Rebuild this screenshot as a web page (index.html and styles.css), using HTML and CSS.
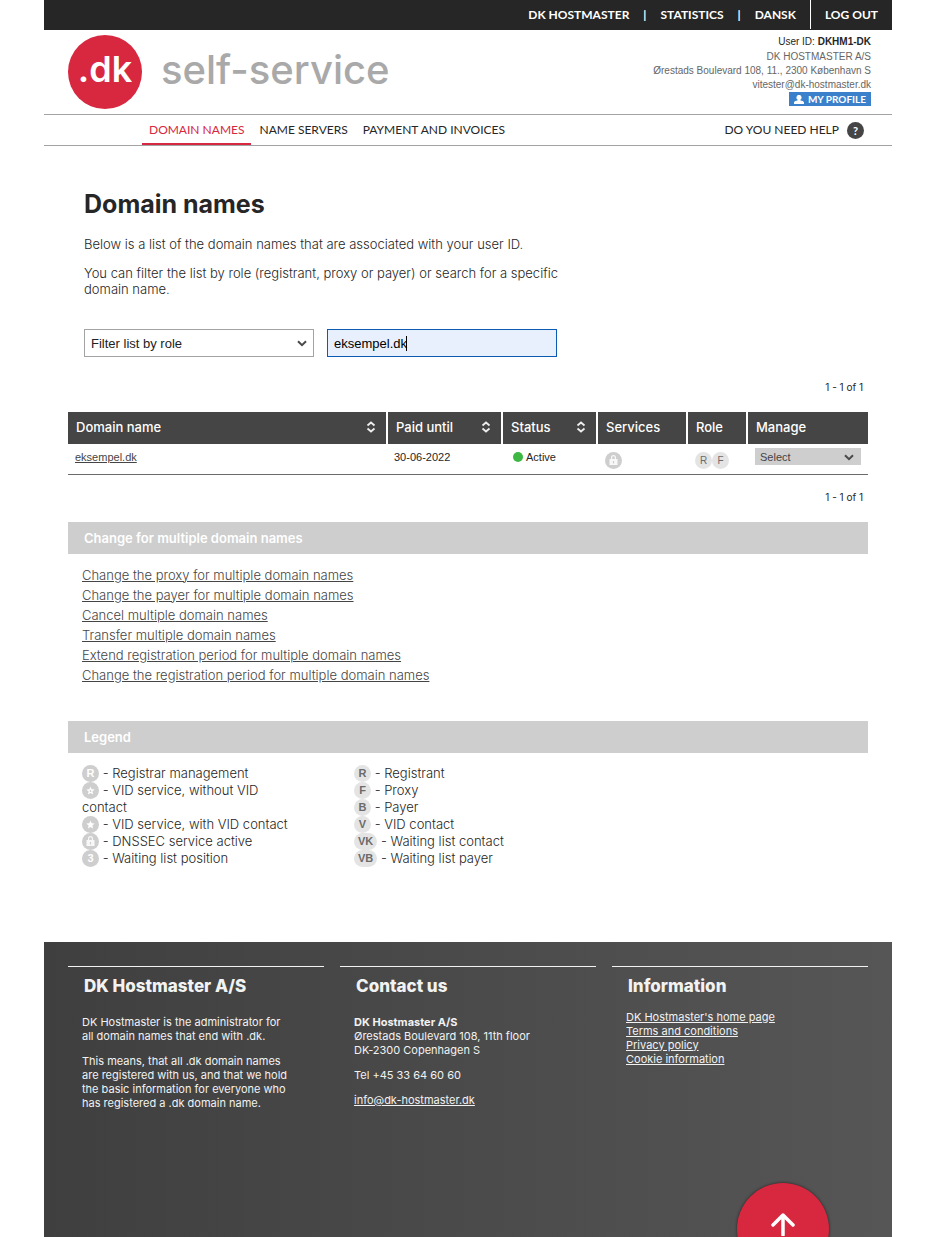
FILE: index.html
```html
<!DOCTYPE html>
<html lang="en">
<head>
<meta charset="utf-8">
<title>Domain names - self-service</title>
<meta name="viewport" content="width=device-width, initial-scale=1">
<link rel="stylesheet" href="styles.css">
</head>
<body>
<svg class="defs" aria-hidden="true">
  <symbol id="lock" viewBox="0 0 17 17"><path d="M4.500 7h8v6h-8zM6 7V5.500a2.500 2.500 0 0 1 5 0V7h-1.200V5.600a1.300 1.300 0 0 0-2.600 0V7z" fill="#fff" opacity=".85"/><path d="M8.500 9v2.500" stroke="#cecece" stroke-width="1.200"/></symbol>
  <symbol id="star" viewBox="0 0 17 17"><path d="M8.500 4.500l1.200 2.800 3 .3-2.300 2 .7 2.900-2.600-1.600-2.600 1.600.7-2.900-2.300-2 3-.3z" fill="#fff"/></symbol>
  <symbol id="star-open" viewBox="0 0 17 17"><path d="M8.500 4.500l1.200 2.800 3 .3-2.300 2 .7 2.900-2.600-1.600-2.600 1.600.7-2.900-2.300-2 3-.3z" fill="#fff"/><circle cx="8.500" cy="9" r=".9" fill="#cecece"/></symbol>
  <symbol id="sort" viewBox="0 0 10 12"><path d="M1.500 4.500L5 1.500l3.500 3M1.500 7.500l3.500 3 3.500-3" fill="none" stroke="#eee" stroke-width="1.800"/></symbol>
  <symbol id="chevron" viewBox="0 0 10 7"><path d="M1 1.200l4 4 4-4" fill="none" stroke="#4a4a4a" stroke-width="2"/></symbol>
</svg>
<div class="page">
  <nav class="topbar" aria-label="Site">
    <div class="topbar-links">
      <a href="#">DK HOSTMASTER</a><span>|</span><a href="#">STATISTICS</a><span>|</span><a href="#">DANSK</a>
    </div>
    <a class="logout" href="#">LOG OUT</a>
  </nav>
  <header class="header">
    <a class="brand" href="#"><span class="brand-disc">.dk</span><span class="brand-name">self-service</span></a>
    <div class="user">
      <p class="user-id">User ID: <b>DKHM1-DK</b></p>
      <p>DK HOSTMASTER A/S</p>
      <p>Ørestads Boulevard 108, 11., 2300 København S</p>
      <p>vitester@dk-hostmaster.dk</p>
      <a class="profile" href="#"><svg width="10" height="9" viewBox="0 0 10 9" aria-hidden="true"><path d="M5 0a2.300 2.500 0 0 1 1.300 4.700v.6c1.500.5 3.700 1 3.700 2.200V9H0V7.500c0-1.200 2.200-1.700 3.700-2.200v-.6A2.300 2.500 0 0 1 5 0z" fill="#fff"/></svg>MY PROFILE</a>
    </div>
  </header>
  <nav class="menu" aria-label="Main">
    <div class="menu-items">
      <a class="current" href="#">DOMAIN NAMES</a>
      <a href="#">NAME SERVERS</a>
      <a href="#">PAYMENT AND INVOICES</a>
    </div>
    <a class="help" href="#">DO YOU NEED HELP <span class="help-mark">?</span></a>
  </nav>
  <main class="main">
    <div class="intro">
      <h1>Domain names</h1>
      <p>Below is a list of the domain names that are associated with your user ID.</p>
      <p>You can filter the list by role (registrant, proxy or payer) or search for a specific domain name.</p>
      <form class="filters">
        <div class="select-box">
          <select class="role-select" aria-label="Filter list by role"><option>Filter list by role</option></select>
          <svg class="select-arrow" width="10" height="7" aria-hidden="true"><use href="#chevron"/></svg>
        </div>
        <div class="search-box">
          <input class="search" type="text" value="eksempel.dk" aria-label="Search for a domain name">
        </div>
      </form>
    </div>
    <p class="count">1 - 1 of 1</p>
    <table class="domains">
      <colgroup><col><col class="c-paid"><col class="c-status"><col class="c-services"><col class="c-role"><col class="c-manage"></colgroup>
      <thead>
        <tr>
          <th><div class="sortable">Domain name<svg width="10" height="12"><use href="#sort"/></svg></div></th>
          <th><div class="sortable">Paid until<svg width="10" height="12"><use href="#sort"/></svg></div></th>
          <th><div class="sortable">Status<svg width="10" height="12"><use href="#sort"/></svg></div></th>
          <th>Services</th>
          <th>Role</th>
          <th>Manage</th>
        </tr>
      </thead>
      <tbody>
        <tr>
          <td><a href="#">eksempel.dk</a></td>
          <td>30-06-2022</td>
          <td><div class="status"><i class="dot"></i>Active</div></td>
          <td><div class="tags"><span class="badge dark"><svg width="17" height="17"><use href="#lock"/></svg></span></div></td>
          <td><div class="tags"><span class="badge small">R</span><span class="badge small">F</span></div></td>
          <td><div class="select-box manage"><select class="manage-select" aria-label="Manage eksempel.dk"><option>Select</option></select><svg class="select-arrow" width="10" height="7" aria-hidden="true"><use href="#chevron"/></svg></div></td>
        </tr>
      </tbody>
    </table>
    <p class="count count-below">1 - 1 of 1</p>
    <h2 class="band">Change for multiple domain names</h2>
    <ul class="actions">
      <li><a href="#">Change the proxy for multiple domain names</a></li>
      <li><a href="#">Change the payer for multiple domain names</a></li>
      <li><a href="#">Cancel multiple domain names</a></li>
      <li><a href="#">Transfer multiple domain names</a></li>
      <li><a href="#">Extend registration period for multiple domain names</a></li>
      <li><a href="#">Change the registration period for multiple domain names</a></li>
    </ul>
    <h2 class="band">Legend</h2>
    <div class="legend">
      <ul>
        <li><span class="badge dark">R</span> - Registrar management</li>
        <li><span class="badge dark"><svg width="17" height="17"><use href="#star-open"/></svg></span> - VID service, without VID contact</li>
        <li><span class="badge dark"><svg width="17" height="17"><use href="#star"/></svg></span> - VID service, with VID contact</li>
        <li><span class="badge dark"><svg width="17" height="17"><use href="#lock"/></svg></span> - DNSSEC service active</li>
        <li><span class="badge dark">3</span> - Waiting list position</li>
      </ul>
      <ul>
        <li><span class="badge">R</span> - Registrant</li>
        <li><span class="badge">F</span> - Proxy</li>
        <li><span class="badge">B</span> - Payer</li>
        <li><span class="badge">V</span> - VID contact</li>
        <li><span class="badge">VK</span> - Waiting list contact</li>
        <li><span class="badge">VB</span> - Waiting list payer</li>
      </ul>
    </div>
  </main>
  <footer class="footer">
    <section>
      <h2>DK Hostmaster A/S</h2>
      <p>DK Hostmaster is the administrator for all domain names that end with .dk.</p>
      <p>This means, that all .dk domain names are registered with us, and that we hold the basic information for everyone who has registered a .dk domain name.</p>
    </section>
    <section>
      <h2>Contact us</h2>
      <p><b>DK Hostmaster A/S</b><br>Ørestads Boulevard 108, 11th floor<br>DK-2300 Copenhagen S</p>
      <p>Tel +45 33 64 60 60</p>
      <p><a href="#">info@dk-hostmaster.dk</a></p>
    </section>
    <section>
      <h2>Information</h2>
      <ul>
        <li><a href="#">DK Hostmaster's home page</a></li>
        <li><a href="#">Terms and conditions</a></li>
        <li><a href="#">Privacy policy</a></li>
        <li><a href="#">Cookie information</a></li>
      </ul>
    </section>
    <a class="to-top" href="#" aria-label="Back to top"><svg width="26" height="24" viewBox="0 0 26 24" aria-hidden="true"><path d="M13 23V3M3 13L13 3l10 10" fill="none" stroke="#fff" stroke-width="3.500" stroke-linecap="round" stroke-linejoin="round"/></svg></a>
  </footer>
</div>
</body>
</html>
```
FILE: styles.css
```css
* { box-sizing: border-box; }

body {
  margin: 0;
  background: #fff;
  color: #262626;
  font-family: Inter, "Liberation Sans", sans-serif;
  font-size: 13px;
}

h1, h2, p, ul { margin: 0; padding: 0; }
ul { list-style: none; }
a { color: inherit; }
.defs { display: none; }

.page {
  display: flex;
  flex-direction: column;
  min-height: 100vh;
  padding: 0 43px 0 44px;
}

.topbar {
  display: flex;
  justify-content: flex-end;
  height: 30px;
  background: #262626;
  color: #fff;
  font-family: Lato, sans-serif;
  font-size: 12px;
  font-weight: 700;
  line-height: 29px;
}
.topbar a { text-decoration: none; }
.topbar-links { display: flex; gap: 14px; padding-right: 14px; }
.topbar .logout { height: 29px; padding: 0 14px; border-left: 1px solid #fff; }

.header {
  display: flex;
  justify-content: space-between;
  height: 84px;
  padding: 4px 21px 0 24px;
}
.brand {
  display: flex;
  align-items: center;
  gap: 19px;
  height: 76px;
  text-decoration: none;
}
.brand-disc {
  width: 74px;
  height: 74px;
  border-radius: 50%;
  background: #d72840;
  color: #fff;
  font-size: 36px;
  font-weight: 600;
  line-height: 68px;
  text-align: center;
}
.brand-name {
  padding-bottom: 5px;
  color: #a9a9a9;
  font-size: 40px;
  font-weight: 500;
}
.user {
  padding-top: 1px;
  color: #666;
  font-family: "Liberation Sans", sans-serif;
  font-size: 10px;
  line-height: 14px;
  text-align: right;
}
.user-id { margin-bottom: 1px; color: #262626; }
.profile {
  display: inline-flex;
  align-items: center;
  gap: 4px;
  height: 14px;
  padding: 0 5px;
  background: #3a80cb;
  color: #fff;
  font-family: Lato, sans-serif;
  font-weight: 700;
  text-decoration: none;
}

.menu {
  display: flex;
  justify-content: space-between;
  height: 32px;
  padding: 0 28px 0 98px;
  border-top: 1px solid #a3a3a3;
  border-bottom: 1px solid #a3a3a3;
  font-family: Lato, sans-serif;
  font-size: 12px;
  line-height: 30px;
}
.menu a { text-decoration: none; }
.menu-items { display: flex; gap: 1px; }
.menu-items a { height: 30px; padding: 0 7px; }
.menu-items .current { border-bottom: 2px solid #d72840; color: #d72840; }
.help { display: flex; align-items: center; gap: 8px; }
.help-mark {
  width: 17px;
  height: 17px;
  border-radius: 50%;
  background: #454545;
  color: #fff;
  font-size: 11px;
  font-weight: 700;
  line-height: 17px;
  text-align: center;
}

.main { padding: 42px 24px 0; }
.intro { padding-left: 16px; }
.intro h1 { font-size: 25px; font-weight: 700; line-height: 32px; margin-bottom: 16px; }
.intro p { max-width: 500px; margin-bottom: 13px; font-weight: 300; line-height: 16px; }

.filters { display: flex; gap: 13px; margin-top: 32px; }
.select-box { position: relative; width: 230px; }
.select-arrow { position: absolute; top: 50%; right: 7px; margin-top: -3px; pointer-events: none; }
.role-select, .search {
  display: block;
  width: 230px;
  height: 28px;
  padding: 0 6px;
  border: 1px solid #a3a3a3;
  border-radius: 0;
  background: #fff;
  color: #222;
  font-family: "Liberation Sans", sans-serif;
  font-size: 13px;
  appearance: none;
}
.search { border-color: #0b5bb5; background: #e8f0fe; color: #000; outline: none; }

/* text cursor after the typed value */
.search-box { position: relative; }
.search-box::after {
  content: "";
  position: absolute;
  top: 7px;
  left: 79px;
  width: 1px;
  height: 15px;
  background: #000;
}

.count { padding: 0 5px; margin: 22px 0 16px; font-size: 10px; line-height: 17px; text-align: right; }
.count-below { margin-top: 14px; }

.domains { width: 100%; border-collapse: collapse; table-layout: fixed; font-family: "Liberation Sans", sans-serif; font-size: 11px; }
.c-paid { width: 115px; }
.c-status { width: 95px; }
.c-services { width: 90px; }
.c-role { width: 60px; }
.c-manage { width: 121px; }
.domains th {
  height: 32px;
  padding: 0 8px 2px;
  border-right: 2px solid #fff;
  background: #454545;
  color: #fff;
  font-family: Inter, sans-serif;
  font-size: 13px;
  font-weight: 500;
  text-align: left;
}
.domains th:last-child { border-right: 0; }
.sortable { display: flex; align-items: center; justify-content: space-between; padding-right: 2px; }
.domains td { height: 30px; padding: 0 7px 4px; border-bottom: 1px solid #6b6b6b; }
.domains td a { color: #454545; }
.status { display: flex; align-items: center; gap: 3px; padding-left: 4px; }
.dot { width: 10px; height: 10px; border-radius: 50%; background: #3cb843; }
.tags { display: flex; padding: 7px 0 0 1px; }
.manage { width: 100%; }
.domains td:last-child { padding-left: 8px; }
.manage-select {
  display: block;
  width: 100%;
  height: 17px;
  padding: 0 5px;
  border: 0;
  border-radius: 0;
  background: #cecece;
  color: #454545;
  font-family: "Liberation Sans", sans-serif;
  font-size: 11px;
  appearance: none;
}

.badge {
  display: inline-block;
  height: 17px;
  min-width: 17px;
  padding: 0 4px;
  border-radius: 9px;
  background: #e4e4e4;
  color: #6b6b6b;
  font-family: "Liberation Sans", sans-serif;
  font-size: 11px;
  font-weight: 700;
  line-height: 17px;
  text-align: center;
  vertical-align: top;
}
.badge.small { font-size: 10px; font-weight: 400; }
.badge.dark { width: 17px; padding: 0; background: #cecece; color: #fff; }
.badge svg { display: block; }

.band {
  height: 32px;
  padding: 0 16px;
  background: #cecece;
  color: #fff;
  font-size: 13px;
  font-weight: 600;
  line-height: 33px;
}
.actions { padding: 11px 14px 0; margin-bottom: 36px; color: #454545; font-weight: 300; line-height: 20px; }
.legend { display: flex; padding: 12px 14px 0; font-weight: 300; line-height: 17px; }
.legend ul { width: 272px; padding-right: 56px; }
.legend ul + ul { padding-right: 0; }

.footer {
  position: relative;
  display: grid;
  grid-template-columns: repeat(3, 1fr);
  gap: 16px;
  flex: 1;
  min-height: 295px;
  margin-top: 75px;
  padding: 24px 24px 0;
  overflow: hidden;
  background: linear-gradient(90deg, #3f3f3f, #565656);
  color: #f2f2f2;
  font-size: 11px;
  line-height: 14px;
}
.footer section { padding: 8px 34px 0 14px; border-top: 1px solid #f2f2f2; }
.footer h2 { margin: 0 0 18px 2px; font-size: 17px; font-weight: 800; line-height: 22px; }
.footer p { margin-bottom: 11px; }
.footer ul { margin-top: -5px; }
.to-top {
  position: absolute;
  right: 63px;
  bottom: -38px;
  display: flex;
  justify-content: center;
  width: 92px;
  height: 92px;
  padding-top: 29px;
  border-radius: 50%;
  background: #d72840;
  box-shadow: 0 0 3px #222;
}
```
